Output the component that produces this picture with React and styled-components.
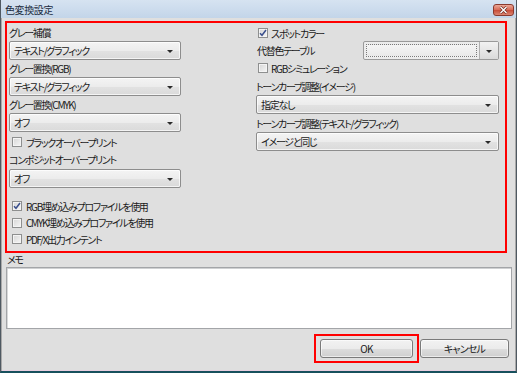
import React from "react";
import styled, { createGlobalStyle } from "styled-components";

const Global = createGlobalStyle`
  html, body {
    margin: 0;
    padding: 0;
    background: #ffffff;
  }
  body {
    font-family: "Noto Sans CJK JP", "Liberation Sans", sans-serif;
    font-feature-settings: "palt";
    color: #1a1a1a;
  }
`;

const Window = styled.div`
  width: 517px;
  height: 373px;
  box-sizing: border-box;
  display: flex;
  flex-direction: column;
  background: #dfdfdf;
  border-left: 1px solid #4f5962;
  border-right: 1px solid #4f5962;
  border-bottom: 2px solid #17505d;
  box-shadow: inset 1px 0 #a9a9a9, inset -1px 0 #a9a9a9, inset 0 -1px #e9cfe0;
`;

const TitleBar = styled.div`
  height: 18px;
  flex: none;
  display: flex;
  align-items: center;
  padding: 0 2px 0 4px;
  background: linear-gradient(#d6e3f1, #c3d5e9);
  font-size: 10px;
  letter-spacing: -0.4px;
  color: #1b2c40;
`;

const CloseButton = styled.div`
  margin-left: auto;
  margin-top: 1px;
  width: 21px;
  height: 12px;
  box-sizing: border-box;
  border: 1px solid #8a3a2e;
  border-radius: 3px;
  background: linear-gradient(#eba898 0%, #d9705c 45%, #c8503c 55%, #dc8570 100%);
  display: flex;
  align-items: center;
  justify-content: center;
`;

const Body = styled.div`
  flex: 1;
  display: flex;
  flex-direction: column;
  padding: 3px 1px 0 4px;
  letter-spacing: -1.3px;
`;

const SettingsBox = styled.div`
  width: 502px;
  height: 232px;
  box-sizing: border-box;
  border: 2px solid #ff0000;
  display: grid;
  grid-template-columns: 172px 243px;
  justify-content: space-between;
  padding: 4px 6px 0 2px;
`;

const Column = styled.div`
  display: flex;
  flex-direction: column;
`;

const Label = styled.div`
  font-size: 10px;
  line-height: 12px;
  height: 12px;
  white-space: nowrap;
  margin: ${(p) => p.$m || "0 0 2px 0"};
`;

const SelectBox = styled.div`
  height: 19px;
  box-sizing: border-box;
  border: 1px solid #8d8d8d;
  border-radius: 2px;
  background: linear-gradient(#f4f4f4 0%, #ececec 50%, #e2e2e2 51%, #dadada 100%);
  box-shadow: inset 0 0 0 1px rgba(255, 255, 255, 0.7);
  display: flex;
  align-items: center;
  padding: 0 0 0 4px;
  font-size: 10px;
  margin: ${(p) => p.$m || "0 0 3px 0"};
`;

const SelectText = styled.span`
  flex: 1;
  white-space: nowrap;
`;

const Arrow = styled.span`
  width: 0;
  height: 0;
  border-left: 3px solid transparent;
  border-right: 3px solid transparent;
  border-top: 3px solid #2a2a2a;
  margin: 1px 7px 0 0;
`;

const ComboRow = styled.div`
  display: flex;
  align-items: center;
  justify-content: space-between;
  height: 19px;
  margin: 2px 0 1px 0;
`;

const Combo = styled.div`
  width: 136px;
  height: 19px;
  box-sizing: border-box;
  border: 1px solid #9a9a9a;
  border-radius: 2px;
  display: flex;
  background: #ececec;
`;

const ComboField = styled.div`
  flex: 1;
  margin: 2px;
  border: 1px dotted #7a7a7a;
  background: linear-gradient(#f5f5f5, #e9e9e9);
`;

const ComboButton = styled.div`
  width: 18px;
  border-left: 1px solid #b0b0b0;
  background: linear-gradient(#f2f2f2, #dadada);
  display: flex;
  align-items: center;
  justify-content: center;
  & > span {
    margin: 1px 0 0 0;
  }
`;

const CheckRow = styled.div`
  display: flex;
  align-items: center;
  gap: ${(p) => p.$gap || 4}px;
  height: ${(p) => p.$h || 14}px;
  padding-left: ${(p) => p.$indent || 3}px;
  font-size: 10px;
  white-space: nowrap;
  margin: ${(p) => p.$m || "0"};
`;

const Box = styled.span`
  width: 10px;
  height: 10px;
  flex: none;
  box-sizing: border-box;
  border: 1px solid #8e8f8f;
  background: linear-gradient(135deg, #d6d6d6, #f6f6f6);
  box-shadow: inset 0 0 0 1px #f4f4f4;
  display: flex;
  align-items: center;
  justify-content: center;
`;

const MemoLabel = styled.div`
  font-size: 10px;
  line-height: 12px;
  margin: 1px 0 1px 2px;
`;

const Memo = styled.div`
  width: 506px;
  height: 62px;
  margin-left: 1px;
  box-sizing: border-box;
  background: #ffffff;
  border: 1px solid #a3a5a8;
  box-shadow: inset 0 1px #cfd0d2, inset 1px 0 #d8d9da;
`;

const ButtonRow = styled.div`
  display: flex;
  align-items: center;
  justify-content: flex-end;
  gap: 1px;
  margin-top: 5px;
  padding-right: 6px;
`;

const Highlight = styled.div`
  border: 2px solid #ff0000;
  padding: 3px 4px;
`;

const Button = styled.div`
  width: ${(p) => p.$w}px;
  height: 19px;
  box-sizing: border-box;
  border: 1px solid #7a7a7a;
  border-radius: 3px;
  background: linear-gradient(#f2f2f2 0%, #ebebeb 50%, #dddddd 51%, #cfcfcf 100%);
  box-shadow: inset 0 0 0 1px rgba(255, 255, 255, 0.6);
  display: flex;
  align-items: center;
  justify-content: center;
  font-size: 10px;
  letter-spacing: -0.8px;
`;

const Check = ({ checked }) => (
  <Box>
    {checked && (
      <svg width="8" height="8" viewBox="0 0 8 8">
        <path d="M1 4.2 L3 6.3 L7 1" fill="none" stroke="#3a4f8d" strokeWidth="1.5" />
      </svg>
    )}
  </Box>
);

const Select = ({ value, m }) => (
  <SelectBox $m={m}>
    <SelectText>{value}</SelectText>
    <Arrow />
  </SelectBox>
);

export default function App() {
  return (
    <>
      <Global />
      <Window>
        <TitleBar>
          色変換設定
          <CloseButton>
            <svg width="9" height="8" viewBox="0 0 9 8">
              <path d="M1.5 1 L7.5 7 M7.5 1 L1.5 7" stroke="#6a2a20" strokeWidth="2.6" />
              <path d="M1.5 1 L7.5 7 M7.5 1 L1.5 7" stroke="#ffffff" strokeWidth="1.4" />
            </svg>
          </CloseButton>
        </TitleBar>
        <Body>
          <SettingsBox>
            <Column>
              <Label>グレー補償</Label>
              <Select value="テキスト/グラフィック" />
              <Label>グレー置換(RGB)</Label>
              <Select value="テキスト/グラフィック" />
              <Label>グレー置換(CMYK)</Label>
              <Select value="オフ" />
              <CheckRow $m="0 0 5px 0">
                <Check />
                ブラックオーバープリント
              </CheckRow>
              <Label $m="0 0 3px 0">コンポジットオーバープリント</Label>
              <Select value="オフ" m="0 0 10px 0" />
              <CheckRow $h={16}>
                <Check checked />
                RGB埋め込みプロファイルを使用
              </CheckRow>
              <CheckRow $h={17}>
                <Check />
                CMYK埋め込みプロファイルを使用
              </CheckRow>
              <CheckRow $h={16}>
                <Check />
                PDF/X出力インテント
              </CheckRow>
            </Column>
            <Column>
              <CheckRow $indent={2} $gap={3} $h={12}>
                <Check checked />
                スポットカラー
              </CheckRow>
              <ComboRow>
                <Label $m="0 0 0 1px">代替色テーブル</Label>
                <Combo>
                  <ComboField />
                  <ComboButton>
                    <Arrow />
                  </ComboButton>
                </Combo>
              </ComboRow>
              <CheckRow $indent={2} $gap={3} $h={14} $m="0 0 6px 0">
                <Check />
                RGBシミュレーション
              </CheckRow>
              <Label>トーンカーブ調整(イメージ)</Label>
              <Select value="指定なし" m="0 0 4px 0" />
              <Label>トーンカーブ調整(テキスト/グラフィック)</Label>
              <Select value="イメージと同じ" />
            </Column>
          </SettingsBox>
          <MemoLabel>メモ</MemoLabel>
          <Memo />
          <ButtonRow>
            <Highlight>
              <Button $w={93}>OK</Button>
            </Highlight>
            <Button $w={89}>キャンセル</Button>
          </ButtonRow>
        </Body>
      </Window>
    </>
  );
}
